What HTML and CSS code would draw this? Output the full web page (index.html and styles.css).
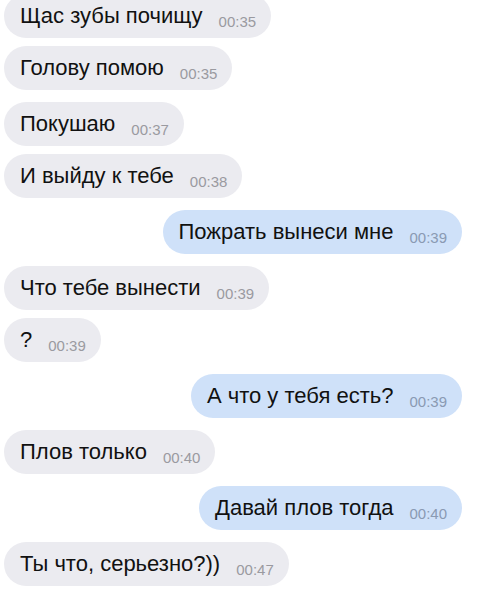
FILE: index.html
```html
<!DOCTYPE html>
<html lang="ru">
<head>
<meta charset="utf-8">
<link rel="stylesheet" href="styles.css">
</head>
<body>
<div class="chat">
  <div class="row in first"><div class="bubble">Щас зубы почищу<span class="time">00:35</span></div></div>
  <div class="row in tight"><div class="bubble">Голову помою<span class="time">00:35</span></div></div>
  <div class="row in"><div class="bubble">Покушаю<span class="time">00:37</span></div></div>
  <div class="row in tight"><div class="bubble">И выйду к тебе<span class="time">00:38</span></div></div>
  <div class="row out"><div class="bubble">Пожрать вынеси мне<span class="time">00:39</span></div></div>
  <div class="row in"><div class="bubble">Что тебе вынести<span class="time">00:39</span></div></div>
  <div class="row in tight"><div class="bubble">?<span class="time">00:39</span></div></div>
  <div class="row out"><div class="bubble">А что у тебя есть?<span class="time">00:39</span></div></div>
  <div class="row in"><div class="bubble">Плов только<span class="time">00:40</span></div></div>
  <div class="row out"><div class="bubble">Давай плов тогда<span class="time">00:40</span></div></div>
  <div class="row in"><div class="bubble">Ты что, серьезно?))<span class="time">00:47</span></div></div>
</div>
</body>
</html>
```

FILE: styles.css
```css
html, body {
  margin: 0;
  padding: 0;
  background: #ffffff;
}
body {
  font-family: "Liberation Sans", Arial, sans-serif;
  color: #111111;
  overflow: hidden;
}
.chat {
  display: flex;
  flex-direction: column;
  padding: 0 21px 0 4px;
  margin-top: -6px;
}
.row {
  display: flex;
  margin-top: 12px;
}
.row.first {
  margin-top: 0;
}
.row.tight {
  margin-top: 8px;
}
.row.in {
  justify-content: flex-start;
}
.row.out {
  justify-content: flex-end;
}
.bubble {
  height: 44px;
  line-height: 44px;
  font-size: 22px;
  padding: 0 15px 0 16px;
  border-radius: 22px;
  background: #ebebf0;
  white-space: nowrap;
}
.out .bubble {
  background: #cfe1f9;
}
.time {
  font-size: 15px;
  margin-left: 16px;
  color: #9a9aa0;
  vertical-align: -4px;
}
.out .time {
  color: #8a9ab3;
}
```
